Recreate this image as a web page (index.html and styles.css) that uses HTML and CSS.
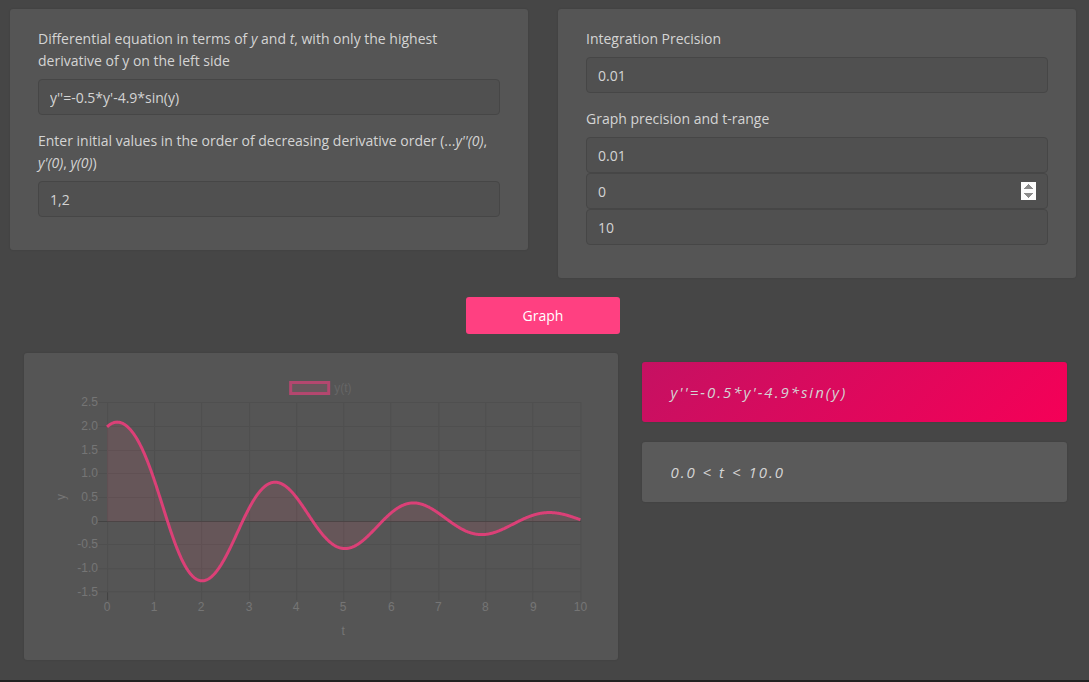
FILE: index.html
```html
<!DOCTYPE html>
<html lang="en">
<head>
<meta charset="utf-8">
<meta name="viewport" content="width=device-width, initial-scale=1">
<title>Differential equation grapher</title>
<link rel="stylesheet" href="styles.css">
</head>
<body>
<main class="page">
  <form class="form">
    <div class="columns">
      <section class="card fields">
        <div class="field">
          <label for="equation">Differential equation in terms of <i>y</i> and <i>t</i>, with only the highest derivative of y on the left side</label>
          <input class="input" id="equation" type="text" value="y''=-0.5*y'-4.9*sin(y)">
        </div>
        <div class="field">
          <label for="initial">Enter initial values in the order of decreasing derivative order (...<i>y''(0)</i>, <i>y'(0)</i>, <i>y(0)</i>)</label>
          <input class="input" id="initial" type="text" value="1,2">
        </div>
      </section>
      <section class="card fields">
        <div class="field">
          <label for="precision">Integration Precision</label>
          <input class="input" id="precision" type="number" step="any" value="0.01">
        </div>
        <div class="field">
          <label for="graph-precision">Graph precision and t-range</label>
          <div class="stack">
            <input class="input" id="graph-precision" type="number" step="any" value="0.01">
            <input class="input stepper" type="number" step="any" value="0" aria-label="Start of t-range">
            <input class="input" type="number" step="any" value="10" aria-label="End of t-range">
          </div>
        </div>
      </section>
    </div>
    <button class="button" type="button">Graph</button>
  </form>
  <div class="results">
    <section class="card chart-card">
      <svg class="chart" viewBox="0 0 538 267" role="img" aria-label="Graph of y(t)">
        <rect class="legend-box" x="238.5" y="9.5" width="38" height="11"/>
        <text class="legend-text" x="282" y="19">y(t)</text>
        <path class="grid" d="M46 29.5H528.5M46 53.5H528.5M46 77.5H528.5M46 100.5H528.5M46 124.5H528.5M46 171.5H528.5M46 195.5H528.5M46 218.5H528.5M102.5 29V227M149.5 29V227M197.5 29V227M244.5 29V227M291.5 29V227M338.5 29V227M386.5 29V227M433.5 29V227M480.5 29V227M528.5 29V227M55.5 29V219"/>
        <path class="axis" d="M46 148.5H528.5M55.5 219V227"/>
        <path class="area" id="area"/>
        <path class="curve" id="curve"/>
        <g class="tick tick-y">
          <text x="46" y="33">2.5</text>
          <text x="46" y="57">2.0</text>
          <text x="46" y="81">1.5</text>
          <text x="46" y="104">1.0</text>
          <text x="46" y="128">0.5</text>
          <text x="46" y="152">0</text>
          <text x="46" y="175">-0.5</text>
          <text x="46" y="199">-1.0</text>
          <text x="46" y="223">-1.5</text>
        </g>
        <g class="tick tick-x">
          <text x="55" y="238">0</text>
          <text x="102" y="238">1</text>
          <text x="149" y="238">2</text>
          <text x="197" y="238">3</text>
          <text x="244" y="238">4</text>
          <text x="291" y="238">5</text>
          <text x="339" y="238">6</text>
          <text x="386" y="238">7</text>
          <text x="433" y="238">8</text>
          <text x="481" y="238">9</text>
          <text x="528" y="238">10</text>
          <text x="291" y="262">t</text>
          <text transform="translate(13 124) rotate(-90)">y</text>
        </g>
      </svg>
    </section>
    <div class="summary">
      <p class="card note note-primary">y''=-0.5*y'-4.9*sin(y)</p>
      <p class="card note">0.0 &lt; t &lt; 10.0</p>
    </div>
  </div>
</main>
<footer class="footer"></footer>
<script src="script.js"></script>
</body>
</html>
```
FILE: styles.css
```css
* {
  box-sizing: border-box;
}

body {
  margin: 0;
  min-height: 100vh;
  display: flex;
  flex-direction: column;
  background: #464646;
  color: #d4d4d4;
  font: 14px/22px "Segoe UI", "Open Sans", "Noto Sans", sans-serif;
}

.page {
  flex: 1;
  padding: 9px 13px 16px 10px;
}

.form {
  display: flex;
  flex-direction: column;
  align-items: center;
  gap: 19px;
}

.columns {
  width: 100%;
  display: grid;
  grid-template-columns: 1fr 1fr;
  align-items: start;
  gap: 30px;
}

.card {
  margin: 0;
  background: #555;
  border-radius: 3px;
  box-shadow: 0 0 2px rgba(0, 0, 0, 0.15);
}

.fields {
  padding: 19px 28px 33px;
  display: grid;
  gap: 15px;
}

.field {
  display: grid;
  gap: 7px;
}

.stack {
  display: grid;
}

.input {
  width: 100%;
  height: 36px;
  padding: 0 11px;
  border: 1px solid #464646;
  border-radius: 4px;
  background: #505050;
  color: inherit;
  font: inherit;
  outline: 0;
}

.stepper::-webkit-inner-spin-button {
  opacity: 1;
}

.button {
  width: 154px;
  height: 37px;
  border: 0;
  border-radius: 3px;
  background: #ff4081;
  color: #fff;
  font: inherit;
}

.results {
  margin-top: 19px;
  padding: 0 9px 0 14px;
  display: grid;
  grid-template-columns: 7fr 5fr;
  align-items: start;
  gap: 24px;
}

.chart-card {
  padding: 20px 28px;
}

.chart {
  display: block;
  width: 100%;
  font: 12px "Liberation Sans", Arial, sans-serif;
}

.grid,
.axis {
  fill: none;
  stroke: #4f4f4f;
}

.axis {
  stroke: #434343;
}

.area {
  fill: #ff6384;
  fill-opacity: 0.1;
}

.curve {
  fill: none;
  stroke: #db4077;
  stroke-width: 3;
  stroke-linejoin: round;
}

.legend-box {
  fill: #68585d;
  stroke: #b4476f;
  stroke-width: 3;
}

.legend-text {
  fill: #666;
}

.tick {
  fill: #757575;
}

.tick-y {
  text-anchor: end;
}

.tick-x {
  text-anchor: middle;
}

.summary {
  margin-top: 9px;
  display: grid;
  gap: 20px;
}

.note {
  padding: 19px 28px;
  background: #5a5a5a;
  font-size: 15px;
  font-style: italic;
  letter-spacing: 2px;
}

.note-primary {
  background: linear-gradient(135deg, #c51162, #f50057);
}

.footer {
  height: 2px;
  background: #222;
}
```
FILE: script.js
```js
// Integrates y'' = -0.5 y' - 4.9 sin(y), y'(0) = 1, y(0) = 2 and draws y(t).
const step = 0.01;
const end = 10;
const plot = { left: 55, zero: 148.5, unitX: 47.3, unitY: 47.3 };

const accel = (y, v) => -0.5 * v - 4.9 * Math.sin(y);
const points = [];
let y = 2;
let v = 1;

for (let i = 0; i <= end / step; i++) {
  const px = plot.left + i * step * plot.unitX;
  const py = plot.zero - y * plot.unitY;
  points.push(px.toFixed(2) + " " + py.toFixed(2));

  v += accel(y, v) * step;
  y += v * step;
}

const line = "M" + points.join("L");
document.getElementById("curve").setAttribute("d", line);
document.getElementById("area").setAttribute(
  "d",
  line + "V" + plot.zero + "H" + plot.left + "Z"
);
```
